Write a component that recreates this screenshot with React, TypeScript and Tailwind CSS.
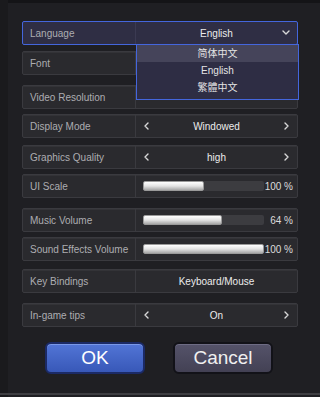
import { ReactNode } from "react"

const font = { fontFamily: '"Liberation Sans", Arial, "Noto Sans CJK SC", sans-serif' }

function Chevron({ dir }: { dir: "left" | "right" | "down" }) {
  const d = dir === "left" ? "M6 2 L3 5 L6 8" : dir === "right" ? "M4 2 L7 5 L4 8" : "M2 4 L5 7 L8 4"
  return (
    <svg width="10" height="10" viewBox="0 0 10 10" fill="none" stroke="#d8d8d8" strokeWidth="1.4" strokeLinecap="round" strokeLinejoin="round">
      <path d={d} />
    </svg>
  )
}

function Row({ label, children, className = "", active = false }: { label: string; children?: ReactNode; className?: string; active?: boolean }) {
  return (
    <div
      className={
        "relative flex h-[24px] rounded-[2px] border " +
        (active ? "border-[#4466dd] bg-[#2f2e44]" : "border-[#3a3a3f] bg-[#2a2a2e] shadow-[inset_0_1px_0_#333337]") +
        " " +
        className
      }
    >
      <div className={"flex w-[113px] items-center border-r pl-[7px] text-[10px] text-[#adadb1] " + (active ? "border-[#3b3a52]" : "border-[#3a3a3f]")}>
        {label}
      </div>
      <div className="flex flex-1 items-stretch">{children}</div>
    </div>
  )
}

function Picker({ value }: { value: string }) {
  return (
    <div className="flex flex-1 items-center justify-between px-[6px]">
      <Chevron dir="left" />
      <span className="text-[10px] text-[#ececec]">{value}</span>
      <Chevron dir="right" />
    </div>
  )
}

function Slider({ pct, fill }: { pct: string; fill: number }) {
  return (
    <div className="flex flex-1 items-center pl-[7px] pr-[4px]">
      <div className="h-[10px] w-[121px] rounded-[2px] bg-[#3c3c40]">
        <div
          className="h-full rounded-[2px] border border-[#9a9a9a] bg-gradient-to-b from-[#ffffff] via-[#e4e4e4] to-[#a8a8a8]"
          style={{ width: fill + "px" }}
        />
      </div>
      <span className="ml-auto text-[10px] text-[#dcdcdc]">{pct}</span>
    </div>
  )
}

export default function App() {
  return (
    <div className="relative h-[397px] w-[320px] overflow-hidden bg-[#1f1f23]" style={font}>
      <div className="h-[3px] bg-[#141417]" />
      <div className="absolute bottom-0 left-0 top-0 w-[8px] bg-[#1a1a1d]" />
      <div className="relative ml-[22px] mt-[18px] w-[276px]">
        <Row label="Language" active className="z-10">
          <div className="relative flex flex-1 items-center justify-center">
            <span className="text-[10px] text-[#ececec]">English</span>
            <span className="absolute right-[6px] top-[5px] flex">
              <Chevron dir="down" />
            </span>
          </div>
          <div className="absolute left-[113px] top-[22px] w-[163px] border border-[#4466dd] bg-[#2e2d44] pb-[3px] text-[10px] text-[#e4e4e4]">
            <div className="flex h-[17px] items-center justify-center bg-[#45445a]">简体中文</div>
            <div className="flex h-[17px] items-center justify-center">English</div>
            <div className="flex h-[17px] items-center justify-center">繁體中文</div>
          </div>
        </Row>
        <Row label="Font" className="mt-[6px]" />
        <Row label="Video Resolution" className="mt-[10px]" />
        <Row label="Display Mode" className="mt-[5px]">
          <Picker value="Windowed" />
        </Row>
        <Row label="Graphics Quality" className="mt-[7px]">
          <Picker value="high" />
        </Row>
        <Row label="UI Scale" className="mt-[5px]">
          <Slider pct="100 %" fill={61} />
        </Row>
        <Row label="Music Volume" className="mt-[10px]">
          <Slider pct="64 %" fill={79} />
        </Row>
        <Row label="Sound Effects Volume" className="mt-[5px]">
          <Slider pct="100 %" fill={121} />
        </Row>
        <Row label="Key Bindings" className="mt-[8px]">
          <div className="flex flex-1 items-center justify-center text-[10px] text-[#ececec]">Keyboard/Mouse</div>
        </Row>
        <Row label="In-game tips" className="mt-[10px]">
          <Picker value="On" />
        </Row>
      </div>
      <div className="mt-[15px] flex gap-[28px] pl-[45px]">
        <button className="flex h-[32px] w-[100px] items-center justify-center rounded-[6px] border-2 border-[#1b2a66] bg-gradient-to-b from-[#5275d6] to-[#3858b8] text-[19px] text-white shadow-[inset_0_1px_0_#7a98e8]">
          OK
        </button>
        <button className="flex h-[32px] w-[100px] items-center justify-center rounded-[6px] border-2 border-[#121218] bg-gradient-to-b from-[#55536a] to-[#434154] text-[19px] text-[#f0f0f0] shadow-[inset_0_1px_0_#6e6c84]">
          Cancel
        </button>
      </div>
      <div className="absolute bottom-[2px] left-0 right-0 h-[2px] bg-[#3e3e42]" />
    </div>
  )
}
